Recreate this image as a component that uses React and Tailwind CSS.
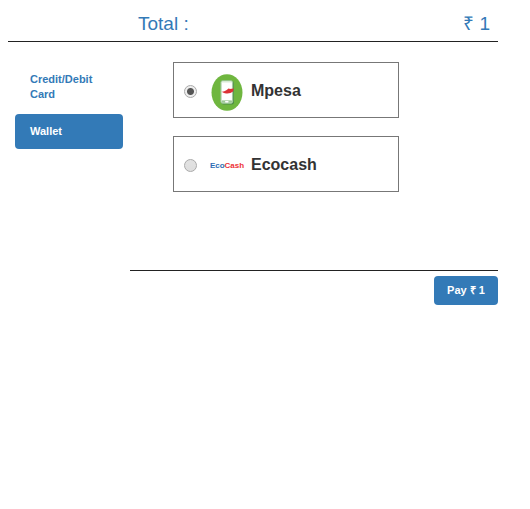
import { useState } from "react";

function MpesaLogo() {
  return (
    <svg viewBox="0 0 32 38" className="h-[38px] w-8" aria-hidden="true">
      <ellipse cx="16" cy="19.5" rx="15.5" ry="18.3" fill="#6fb63f" />
      <rect x="10.6" y="8.2" width="12.4" height="23.2" rx="2" fill="#4b8c45" />
      <rect x="9.8" y="7.6" width="12" height="22.8" rx="2" fill="#dfeedd" stroke="#8fbf86" strokeWidth="0.8" />
      <rect x="11" y="9.6" width="9.8" height="17.4" fill="#fff" />
      <rect x="10.6" y="27.6" width="10.4" height="2.2" rx="0.8" fill="#9cc796" />
      <rect x="14" y="28" width="3.600" height="1.4" rx="0.7" fill="#fff" />
      <path d="M10.600 18.600c1.800.2 3.200-.4 4.700-1.400l2.700-1.900.6.8 4.200-.5-.7 3c-1.900 1.400-4.400 2.100-6.900 1.800-2-.1-3.600-.7-4.600-1.800z" fill="#dc3237" />
    </svg>
  );
}

function EcocashLogo() {
  return (
    <span className="text-[8px] leading-none font-bold text-[#2e6db4]" aria-hidden="true">
      Eco<span className="text-[#ed3237]">Cash</span>
    </span>
  );
}

const wallets = [
  { id: "mpesa", name: "Mpesa", Logo: MpesaLogo },
  { id: "ecocash", name: "Ecocash", Logo: EcocashLogo },
];

export default function App() {
  const [wallet, setWallet] = useState("mpesa");

  return (
    <main className="mr-8 ml-2 bg-white font-['Liberation_Sans',Arial,sans-serif] text-[#333]">
      <header className="flex h-[42px] items-center justify-between border-b border-[#222] pt-2 pr-2 pl-[130px] text-[19px] text-[#337ab7]">
        <span>Total :</span>
        <span>₹ 1</span>
      </header>

      <div className="flex">
        <nav className="ml-[7px] flex w-[108px] shrink-0 flex-col gap-0.5 pt-5 text-[11px] leading-[15px] font-bold">
          <a href="#card" className="rounded px-[15px] py-2.5 text-[#337ab7]">
            Credit/Debit Card
          </a>
          <a href="#wallet" aria-current="page" className="rounded bg-[#337ab7] px-[15px] py-2.5 text-white">
            Wallet
          </a>
        </nav>

        <form className="ml-[7px] flex-1" onSubmit={(event) => event.preventDefault()}>
          <div className="flex h-[229px] flex-col gap-[18px] border-b border-[#222] pt-5 pl-[43px]">
            {wallets.map(({ id, name, Logo }) => (
              <label
                key={id}
                className="flex h-14 w-[226px] items-center border border-[#777] pt-0.5 pl-2.5 text-base font-bold"
              >
                <input
                  type="radio"
                  name="wallet"
                  value={id}
                  checked={wallet === id}
                  onChange={() => setWallet(id)}
                  className="size-[13px] appearance-none rounded-full border border-[#aaa] bg-linear-to-b from-[#e2e2e2] to-[#dedede] checked:bg-[radial-gradient(circle,#555_0_3px,#eee_4px)]"
                />
                <span className="mr-1.5 ml-3 flex w-9 items-center justify-center pt-0.5">
                  <Logo />
                </span>
                <span>{name}</span>
              </label>
            ))}
          </div>
          <div className="mt-[5px] flex justify-end">
            <button
              type="submit"
              className="h-[29px] w-16 rounded bg-[#337ab7] text-[11px] leading-[15px] font-bold text-white"
            >
              Pay ₹ 1
            </button>
          </div>
        </form>
      </div>
    </main>
  );
}
